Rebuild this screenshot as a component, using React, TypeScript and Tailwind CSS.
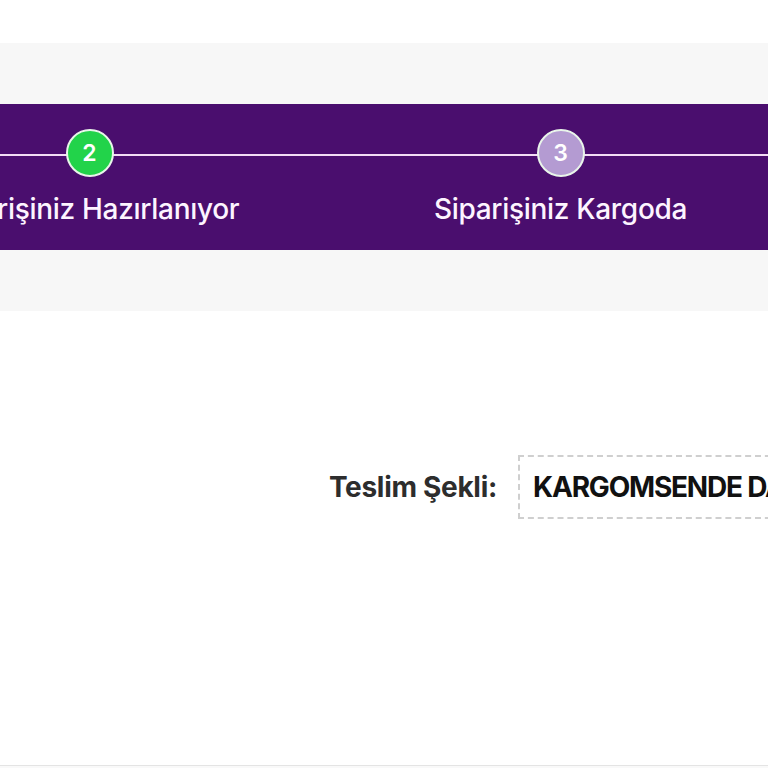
import React from "react";

const steps = [
  { n: 1, label: "Siparişiniz Alındı", color: "bg-[#22d34a]" },
  { n: 2, label: "Siparişiniz Hazırlanıyor", color: "bg-[#22d34a]" },
  { n: 3, label: "Siparişiniz Kargoda", color: "bg-[#b49bd2]" },
  { n: 4, label: "Teslim Edildi", color: "bg-[#b49bd2]" },
];

export default function App() {
  return (
    <div className="w-[768px] h-[768px] overflow-hidden bg-white flex flex-col font-['Inter','Liberation_Sans',sans-serif]">
      <div className="h-[43px] shrink-0 bg-white" />
      <div className="shrink-0 bg-[#f7f7f7] pt-[61px] pb-[61px]">
        <div className="relative h-[146px] bg-[#4a0e6e] overflow-hidden">
          <div className="absolute left-0 right-0 top-[50px] h-[2px] bg-[#f3dcf5]" />
          <div className="relative flex ml-[-617px] w-max">
            {steps.map((s) => (
              <div key={s.n} className="w-[471px] flex flex-col items-center">
                <div
                  className={`mt-[25px] w-[48px] h-[48px] rounded-full border-2 border-[#e9f5ea] ${s.color} flex items-center justify-center text-white text-[23px] font-semibold`}
                >
                  {s.n}
                </div>
                <div className="mt-[15px] text-[28px] leading-[34px] font-medium text-[#fdf4ff] whitespace-nowrap tracking-[-0.3px]">
                  {s.label}
                </div>
              </div>
            ))}
          </div>
        </div>
      </div>
      <div className="flex-1 bg-white">
        <div className="mt-[144px] flex items-center">
          <div className="w-[497px] shrink-0 text-right text-[28px] font-bold text-[#2d2d2d] whitespace-nowrap tracking-[-0.3px]">
            Teslim Şekli:
          </div>
          <div className="ml-[21px] shrink-0 h-[64px] border-2 border-dashed border-[#cfcfcf] pl-[13px] pr-[20px] flex items-center text-[28px] font-bold text-[#111111] whitespace-nowrap tracking-[-1.2px]">
            KARGOMSENDE DAĞITIMDA
          </div>
        </div>
      </div>
      <div className="h-[3px] shrink-0 border-t border-[#e4e4e4] bg-[#f9f9f9]" />
    </div>
  );
}
